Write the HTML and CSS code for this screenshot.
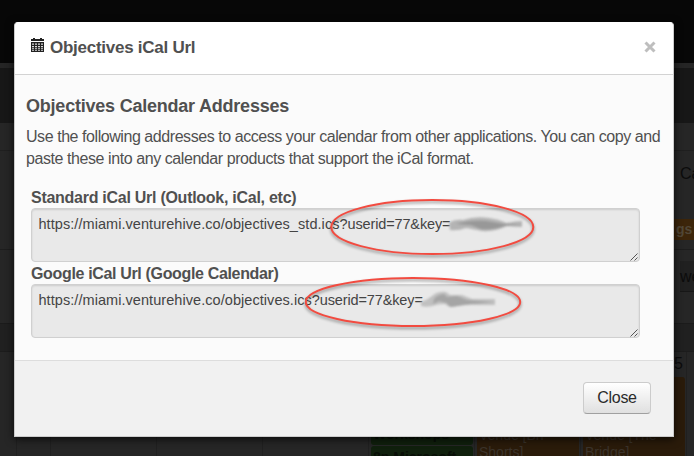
FILE: index.html
```html
<!DOCTYPE html>
<html lang="en">
<head>
<meta charset="utf-8">
<title>Objectives iCal Url</title>
<link rel="stylesheet" href="styles.css">
</head>
<body>
<div class="page">
  <div class="topbar"></div>
  <div class="subbar"></div>
  <div class="crumbs"></div>
  <div class="title-gap"></div>
  <div class="side title-row">Ca</div>
  <div class="side tag-row"><span class="tag">gs</span></div>
  <div class="side tool-row"><span class="week">we</span></div>
  <div class="days-head"></div>
  <div class="calendar">
    <div class="day"></div><div class="day"></div><div class="day"></div><div class="day"></div>
    <div class="day"><div class="event green first">Workshops</div><div class="event green">8p Microsoft</div></div>
    <div class="day"><div class="event orange"><span>Venue [Bri</span><span>Shorts]</span></div></div>
    <div class="day"><div class="num">5</div><div class="event orange"><span>Venue [The</span><span>Bridge]</span></div></div>
    <div class="day"></div>
  </div>
</div>
<div class="modal">
  <div class="modal-header">
    <svg class="cal-icon" viewBox="0 0 13 14"><path fill="#222" d="M0 1h2V0h2v1h5V0h2v1h2v2H0zM0 4h13v10H0z"/><path fill="#ddd" d="M1 5.500h2v1.300H1zM4 5.500h2v1.300H4zM7 5.500h2v1.300H7zM10 5.500h2v1.300h-2zM1 8h2v1.200H1zM4 8h2v1.200H4zM7 8h2v1.200H7zM10 8h2v1.200h-2zM1 10.200h2v1H1zM4 10.200h2v1H4zM7 10.200h2v1H7zM10 10.200h2v1h-2zM1 12.200h2v.8H1zM4 12.200h2v.8H4zM7 12.200h2v.8H7zM10 12.200h2v.8h-2z"/></svg>
    <h3 class="title"><span>Objectives iCal Url</span></h3>
    <svg class="dismiss" viewBox="0 0 12 12"><path d="M1.500 1.500l9 9M10.500 1.500l-9 9"/></svg>
  </div>
  <div class="modal-body">
    <h4 class="heading"><span>Objectives Calendar Addresses</span></h4>
    <p class="intro"><span class="l1">Use the following addresses to access your calendar from other applications. You can copy and</span><br><span class="l2">paste these into any calendar products that support the iCal format.</span></p>
    <div class="field">
      <div class="label"><span class="lab1">Standard iCal Url (Outlook, iCal, etc)</span></div>
      <div class="box"><span class="path">https://miami.venturehive.co/objectives_std.ics</span><span class="query">?userid=77&amp;key=</span>
        <svg class="grip" viewBox="0 0 8 8"><path d="M.5 7.5l7-7M4.5 7.5l3-3"/></svg></div>
    </div>
    <div class="field">
      <div class="label"><span class="lab2">Google iCal Url (Google Calendar)</span></div>
      <div class="box"><span class="path">https://miami.venturehive.co/objectives.ics</span><span class="query">?userid=77&amp;key=</span>
        <svg class="grip" viewBox="0 0 8 8"><path d="M.5 7.5l7-7M4.5 7.5l3-3"/></svg></div>
    </div>
  </div>
  <div class="modal-footer"><button class="btn">Close</button></div>
</div>
<svg class="marks" viewBox="0 0 694 456">
  <g class="smudge">
    <path fill="#b4b4b4" d="M449 223q6-4 14-3 12-4 26-2 9 1 18 5 8-2 15-2v6q-8 0-15-1-12 6-25 5-10-2-16-3-8 3-16 2z"/>
    <path fill="#989898" d="M456 224q14-4 30-3l18 3 18 0-18 2q-10 4-23 3l-10-4z"/>
    <path fill="#c0c0c0" d="M421 302q6-2 11-6 6-5 14-4l4 3 12 0 10 4h23v6l-18 0q-12-1-24 2-5 0-8-3-6 0-9 1-8 3-15 1z"/>
    <path fill="#a5a5a5" d="M434 299q3-4 10-5l3 3 10-1 10 4 27 2-22 2-22 3-3-4-8-2-6 3z"/>
  </g>
  <g class="ring"><ellipse cx="432.3" cy="227" rx="101" ry="27"/><ellipse cx="413" cy="302" rx="107.2" ry="24"/></g>
</svg>
</body>
</html>
```
FILE: styles.css
```css
* { box-sizing: border-box; }
body { margin: 0; width: 694px; height: 456px; overflow: hidden; position: relative; background: #262626; font-family: "Liberation Sans", Arial, sans-serif; color: #505050; }
h3, h4, p { margin: 0; }
span { white-space: nowrap; }
.page { height: 456px; overflow: hidden; color: #0c0c0c; font-size: 16px; }
.topbar { height: 63px; background: #070707; }
.subbar { height: 5px; background: #252525; }
.crumbs { height: 55px; background: #171717; }
.title-gap { height: 28px; border-bottom: 1px solid #1f1f1f; }
.side { padding-left: 680px; white-space: nowrap; overflow: hidden; }
.title-row { height: 67px; padding-top: 14px; }
.tag-row { height: 32px; border-bottom: 1px solid #1d1d1d; }
.tag { display: block; height: 21px; margin-left: -10px; padding-left: 6px; margin-top: 1px; background: #3c250a; color: #514737; font-weight: bold; font-size: 14px; line-height: 21px; }
.tool-row { height: 73px; padding-top: 11px; }
.week { display: block; height: 31px; line-height: 31px; background: #202020; border-bottom: 1px solid #171717; }
.days-head { height: 29px; background: #202020; border-top: 1px solid #1b1b1b; border-bottom: 1px solid #1c1c1c; }
.calendar { display: grid; grid-template-columns: 34px repeat(6, 106px) 8px; height: 104px; margin-left: 16px; }
.day { border-left: 1px solid #202020; padding: 0 2px; overflow: hidden; display: flex; flex-direction: column; }
.num { flex: none; height: 25px; padding: 4px 1px 0; text-align: right; line-height: 16px; margin-bottom: -25px; }
.event { flex: none; width: 102px; margin-top: 25px; padding: 50px 2px 0; border-radius: 3px; font-size: 14px; line-height: 17px; display: flex; flex-direction: column; height: 90px; }
.green { background: #10200d; color: #080e07; margin-top: 1px; padding-top: 3px; height: 24px; font-weight: bold; }
.green.first { margin-top: 25px; padding-top: 49px; height: 68px; }
.orange { background: #2a1b0a; color: #3b332b; }
.modal { position: absolute; left: 14px; top: 22px; width: 660px; height: 415px; display: flex; flex-direction: column; background: #fbfbfb; border: 1px solid #ccc; border-top-color: #fff; border-radius: 4px 4px 0 0; box-shadow: 0 2px 9px rgba(0,0,0,.75); overflow: hidden; }
.modal-header { flex: none; height: 52px; display: flex; align-items: center; background: #fff; border-bottom: 1px solid #d3d3d3; padding: 0 17px 0 16px; }
.cal-icon { width: 13px; height: 14px; margin-bottom: 7px; }
.title { flex: 1; margin: -2px 0 0 6px; font-size: 17px; line-height: 20px; }
.title span { letter-spacing: -.26px; }
.dismiss { width: 12px; height: 12px; margin-top: -3px; fill: none; stroke: #bebebe; stroke-width: 3; }
.modal-body { flex: 1; padding: 20px 11px 0; }
.heading { font-size: 18px; line-height: 22px; height: 31px; letter-spacing: -.22px; }
.intro { font-size: 16px; line-height: 22px; height: 69px; }
.l1 { letter-spacing: -.44px; }
.l2 { letter-spacing: -.425px; }
.field { width: 609px; margin-left: 5px; height: 76px; margin-top: -9px; margin-bottom: 9px; }
.label { font-size: 16px; font-weight: bold; line-height: 24px; height: 22px; }
.lab1 { letter-spacing: -.27px; }
.lab2 { letter-spacing: -.34px; }
.box { position: relative; height: 54px; padding: 7px 6.5px; line-height: 17px; font-size: 14.5px; color: #444; background: #e9e9e9; border: 1px solid #d0d0d0; border-radius: 4px; box-shadow: inset 0 1px 2px rgba(0,0,0,.12); }
.path { letter-spacing: .06px; }
.query { letter-spacing: -.13px; }
.grip { position: absolute; right: 1px; bottom: 0; width: 8px; height: 8px; stroke: #555; stroke-width: 1; fill: none; }
.modal-footer { flex: none; height: 76px; display: flex; justify-content: flex-end; padding: 21px 22px 0; background: #f1f1f1; border-top: 1px solid #ddd; }
.btn { width: 68px; height: 32px; padding: 0; border: 1px solid #ccc; border-bottom-color: #a0a0a0; border-radius: 4px; background: linear-gradient(#fff, #e0e0e0); color: #2b2b2b; font: 16px "Liberation Sans", Arial, sans-serif; letter-spacing: -.3px; }
.marks { position: absolute; left: 0; top: 0; width: 694px; height: 456px; }
.smudge { filter: blur(1.1px); }
.ring { fill: none; stroke: #f24b40; stroke-width: 2; filter: drop-shadow(0 2px 1.5px rgba(0,0,0,.4)); }
```
